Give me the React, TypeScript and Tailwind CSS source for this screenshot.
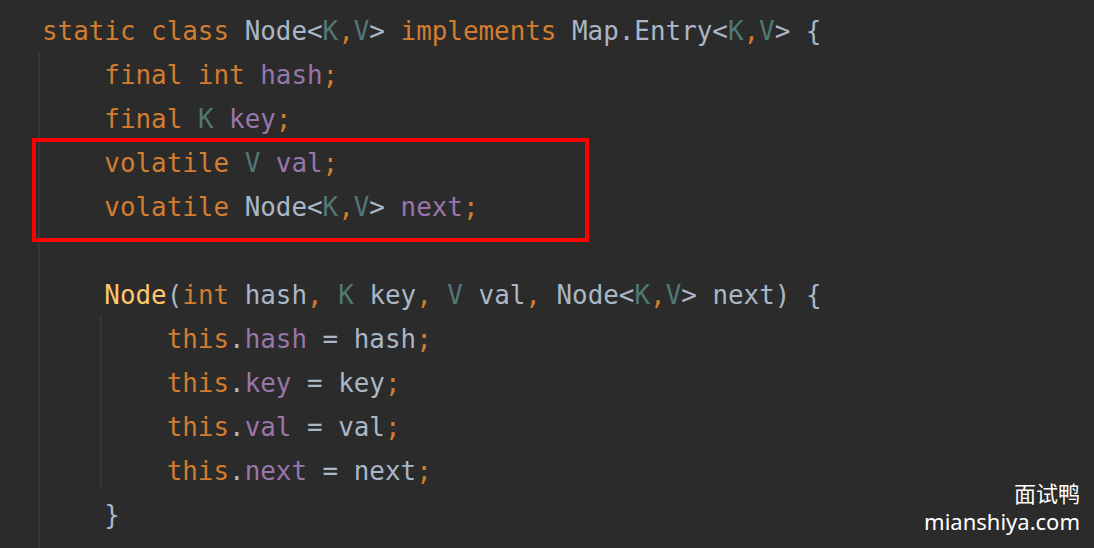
import React from "react";

type Tok = [string, string];

const K = "text-[#d27d2f]"; // keyword / punctuation
const D = "text-[#a9b7c6]"; // default
const P = "text-[#9876aa]"; // field
const T = "text-[#507874]"; // type param
const M = "text-[#ffc66d]"; // method decl

const lines: Tok[][] = [
  [["static class ", K], ["Node<", D], ["K", T], [",", K], ["V", T], ["> ", D], ["implements ", K], ["Map.Entry<", D], ["K", T], [",", K], ["V", T], ["> {", D]],
  [["    final int ", K], ["hash", P], [";", K]],
  [["    final ", K], ["K ", T], ["key", P], [";", K]],
  [["    volatile ", K], ["V ", T], ["val", P], [";", K]],
  [["    volatile ", K], ["Node<", D], ["K", T], [",", K], ["V", T], ["> ", D], ["next", P], [";", K]],
  [],
  [["    ", D], ["Node", M], ["(", D], ["int ", K], ["hash", D], [", ", K], ["K ", T], ["key", D], [", ", K], ["V ", T], ["val", D], [", ", K], ["Node<", D], ["K", T], [",", K], ["V", T], ["> next) {", D]],
  [["        this", K], [".", D], ["hash", P], [" = hash", D], [";", K]],
  [["        this", K], [".", D], ["key", P], [" = key", D], [";", K]],
  [["        this", K], [".", D], ["val", P], [" = val", D], [";", K]],
  [["        this", K], [".", D], ["next", P], [" = next", D], [";", K]],
  [["    }", D]],
];

export default function App() {
  return (
    <div className="relative w-[1094px] h-[548px] overflow-hidden bg-[#2b2b2b]">
      <div
        className="flex flex-col pt-[9px] pl-[42px] text-[25.9px] leading-[44px] whitespace-pre"
        style={{ fontFamily: '"DejaVu Sans Mono", "Liberation Mono", monospace' }}
      >
        {lines.map((ln, i) => (
          <div key={i} className="h-[44px]">
            {ln.map(([t, c], j) => (
              <span key={j} className={c}>
                {t}
              </span>
            ))}
          </div>
        ))}
      </div>

      {/* indent guides */}
      <div className="absolute left-[38px] top-[52px] w-[2px] h-[496px] bg-[#363636]" />
      <div className="absolute left-[100px] top-[316px] w-[2px] h-[174px] bg-[#363636]" />

      {/* red highlight box */}
      <div className="absolute left-[32px] top-[138px] w-[557px] h-[104px] border-4 border-[#ff0000]" />

      {/* watermark */}
      <div
        className="absolute right-[14px] top-[479px] flex flex-col items-end text-white text-[22px] leading-[28px]"
        style={{ fontFamily: '"Noto Sans", "Noto Sans CJK SC", sans-serif' }}
      >
        <div>面试鸭</div>
        <div>mianshiya.com</div>
      </div>
    </div>
  );
}
